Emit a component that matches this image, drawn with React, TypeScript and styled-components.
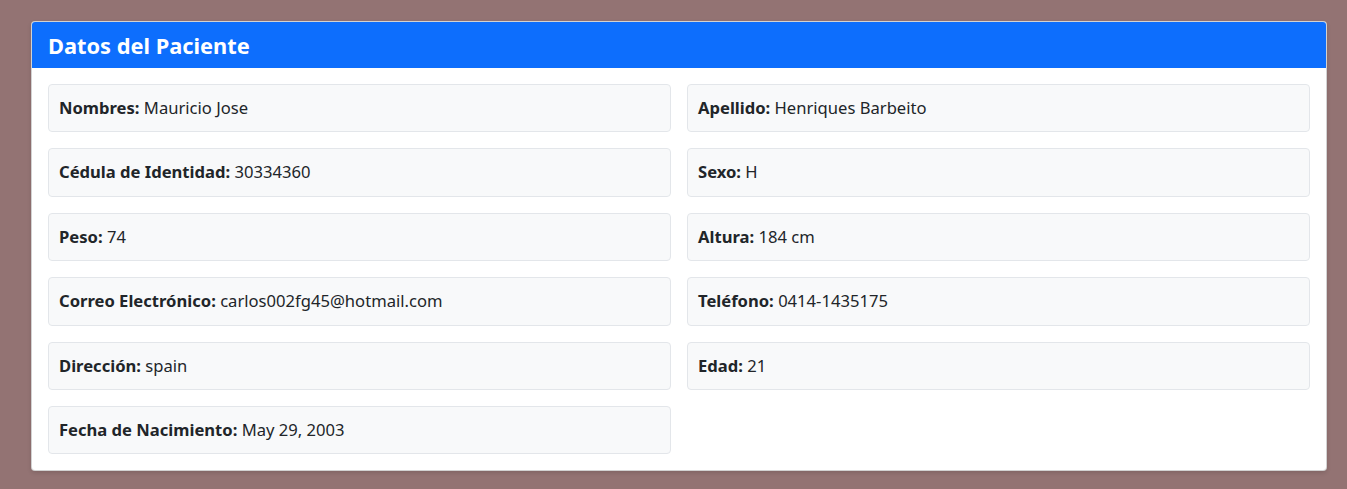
import styled, { createGlobalStyle } from "styled-components";

const GlobalStyle = createGlobalStyle`
  body {
    margin: 0;
    background-color: #937373;
    font-family: "Noto Sans", "Open Sans", sans-serif;
    color: #212529;
  }
`;

const Page = styled.div`
  padding: 21px 20px 18px 31px;
`;

const Card = styled.div`
  display: flex;
  flex-direction: column;
  background-color: #fff;
  border: 1px solid rgba(0, 0, 0, 0.175);
  border-radius: 4px;
  box-shadow: 0 2px 4px rgba(0, 0, 0, 0.12);
  overflow: hidden;
`;

const Header = styled.div`
  height: 46px;
  display: flex;
  align-items: center;
  padding: 0 16px;
  background-color: #0d6efd;
  color: #fff;
  font-size: 21.8px;
  font-weight: 700;
`;

const Body = styled.div`
  display: grid;
  grid-template-columns: 1fr 1fr;
  column-gap: 16px;
  row-gap: 16px;
  padding: 16px;
`;

const Field = styled.div`
  height: 48.4px;
  line-height: 46.4px;
  box-sizing: border-box;
  padding: 0 10px;
  background-color: #f8f9fa;
  border: 1px solid #e3e6ea;
  border-radius: 4px;
  font-size: 16.6px;
  white-space: nowrap;
`;

const Label = styled.strong`
  font-weight: 700;
`;

const fields: [string, string][] = [
  ["Nombres:", "Mauricio Jose"],
  ["Apellido:", "Henriques Barbeito"],
  ["Cédula de Identidad:", "30334360"],
  ["Sexo:", "H"],
  ["Peso:", "74"],
  ["Altura:", "184 cm"],
  ["Correo Electrónico:", "carlos002fg45@hotmail.com"],
  ["Teléfono:", "0414-1435175"],
  ["Dirección:", "spain"],
  ["Edad:", "21"],
  ["Fecha de Nacimiento:", "May 29, 2003"],
];

function App() {
  return (
    <>
      <GlobalStyle />
      <Page>
        <Card>
          <Header>Datos del Paciente</Header>
          <Body>
            {fields.map(([label, value]) => (
              <Field key={label}>
                <Label>{label}</Label> {value}
              </Field>
            ))}
          </Body>
        </Card>
      </Page>
    </>
  );
}

export default App;
